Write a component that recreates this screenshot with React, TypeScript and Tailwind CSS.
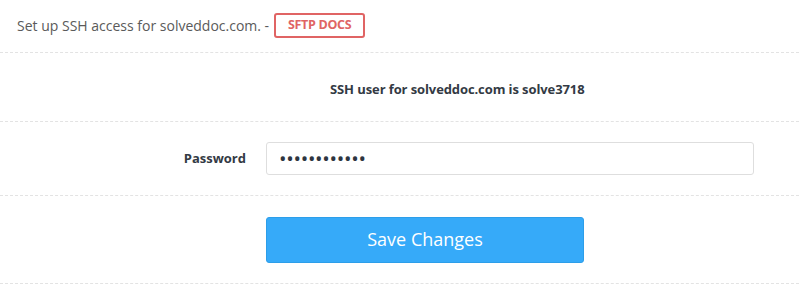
import React from "react";

export default function App() {
  const font = { fontFamily: '"Open Sans", "Noto Sans", sans-serif' };
  return (
    <div className="w-[799px] h-[291px] bg-white" style={font}>
      <div className="h-[53px] border-b border-dashed border-[#e3e3e3] flex items-center pl-[17px] pb-[1px]">
        <span className="text-[14px] text-[#5a5a5a]">Set up SSH access for solveddoc.com. -</span>
        <span className="ml-[5px] h-[25px] w-[91px] justify-center flex items-center border-2 border-[#e06464] rounded-[3px] text-[12.5px] font-bold text-[#e06464] tracking-[-0.3px]">
          SFTP DOCS
        </span>
      </div>
      <div className="h-[69px] border-b border-dashed border-[#e3e3e3] flex items-center pl-[330px] pt-[5px]">
        <span className="text-[13px] font-bold text-[#333a44] tracking-[-0.1px]">SSH user for solveddoc.com is solve3718</span>
      </div>
      <div className="h-[74px] border-b border-dashed border-[#e3e3e3] flex items-center">
        <label className="w-[246px] text-right text-[13px] font-bold text-[#333a44]">Password</label>
        <input
          type="password"
          readOnly
          value="passwordxxxx"
          className="ml-[20px] w-[488px] h-[33px] border border-[#dedede] rounded-[3px] px-[12px] text-[20px] tracking-[-0.3px] text-[#2e3540] outline-none"
          style={font}
        />
      </div>
      <div className="h-[88px] border-b border-dashed border-[#e3e3e3] flex items-center">
        <button
          className="ml-[266px] w-[318px] h-[46px] bg-[#36aaf9] border border-[#2d9ee9] rounded-[3px] text-white text-[18px]"
          style={font}
        >
          Save Changes
        </button>
      </div>
    </div>
  );
}
